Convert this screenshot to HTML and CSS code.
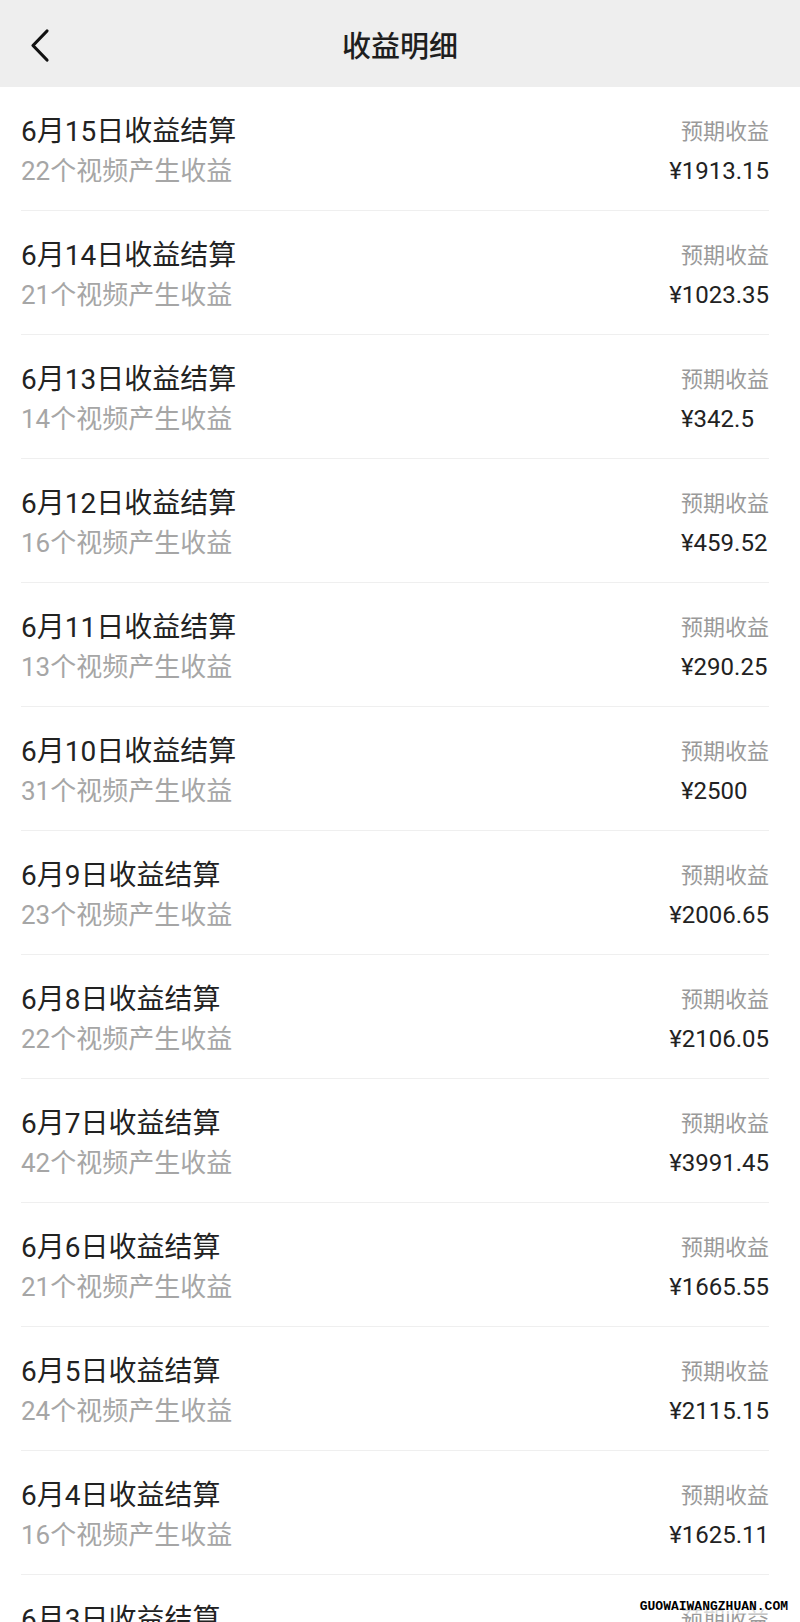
FILE: index.html
```html
<!DOCTYPE html>
<html lang="zh-CN"><head>
  <meta charset="UTF-8"><meta name="viewport" content="width=device-width, initial-scale=1.0">
  <title>收益明细</title>
  <link rel="stylesheet" href="styles.css">
</head><body>

<div class="topbar">
  <svg class="back" width="24" height="36" viewBox="0 0 24 36"><path d="M19 3 L5 17.5 L19 32" fill="none" stroke="#111" stroke-width="3.2" stroke-linecap="round" stroke-linejoin="round"/></svg>
  <h1>收益明细</h1>
</div>

<ul class="list" id="list"></ul>

<div class="mark">GUOWAIWANGZHUAN.COM</div>

<script>
  const rows=[
    [15,22,"1913.15"],[14,21,"1023.35"],[13,14,"342.5"],[12,16,"459.52"],
    [11,13,"290.25"],[10,31,"2500"],[9,23,"2006.65"],[8,22,"2106.05"],
    [7,42,"3991.45"],[6,21,"1665.55"],[5,24,"2115.15"],[4,16,"1625.11"],[3,18,"1200.40"]
  ];
  const list=document.getElementById("list");
  rows.forEach(([day,n,amt])=>{
    const li=document.createElement("li");
    li.className="item";
    li.innerHTML=`
      <div class="left">
        <div class="title">6月${day}日收益结算</div>
        <div class="sub">${n}个视频产生收益</div>
      </div>
      <div class="right">
        <div class="label">预期收益</div>
        <div class="amount">¥${amt}</div>
      </div>`;
    list.appendChild(li);
  });
</script>

</body></html>
```

FILE: styles.css
```css
body{margin:0;background:#fff;font-family:Roboto,"Noto Sans CJK SC",sans-serif;color:#222;height:1622px;overflow:hidden;position:relative;}
.topbar{height:87px;background:#eeeeee;display:flex;align-items:center;justify-content:center;position:relative;}
.topbar h1{margin:0;font-size:29px;font-weight:500;color:#1e1e1e;line-height:40px;margin-top:6px;}
.back{position:absolute;left:28px;top:28px;}
.list{list-style:none;margin:0;padding:0 31px 0 21px;}
.item{display:flex;justify-content:space-between;height:124px;padding-top:28px;box-sizing:border-box;border-bottom:1px solid #efefef;}
.left,.right{display:flex;flex-direction:column;gap:5px;}
.right{align-items:flex-end;}
.title{font-size:28px;line-height:34px;color:#222;}
.sub{font-size:26px;line-height:34px;color:#a6a6a6;}
.label{font-size:22px;line-height:34px;color:#9a9a9a;}
.amount{font-size:24px;line-height:34px;color:#222;min-width:88px;}
.mark{position:absolute;right:10px;top:1599px;font:bold 13px "Liberation Mono",monospace;color:#000;background:rgba(255,255,255,.6);padding:0 2px;}
```
